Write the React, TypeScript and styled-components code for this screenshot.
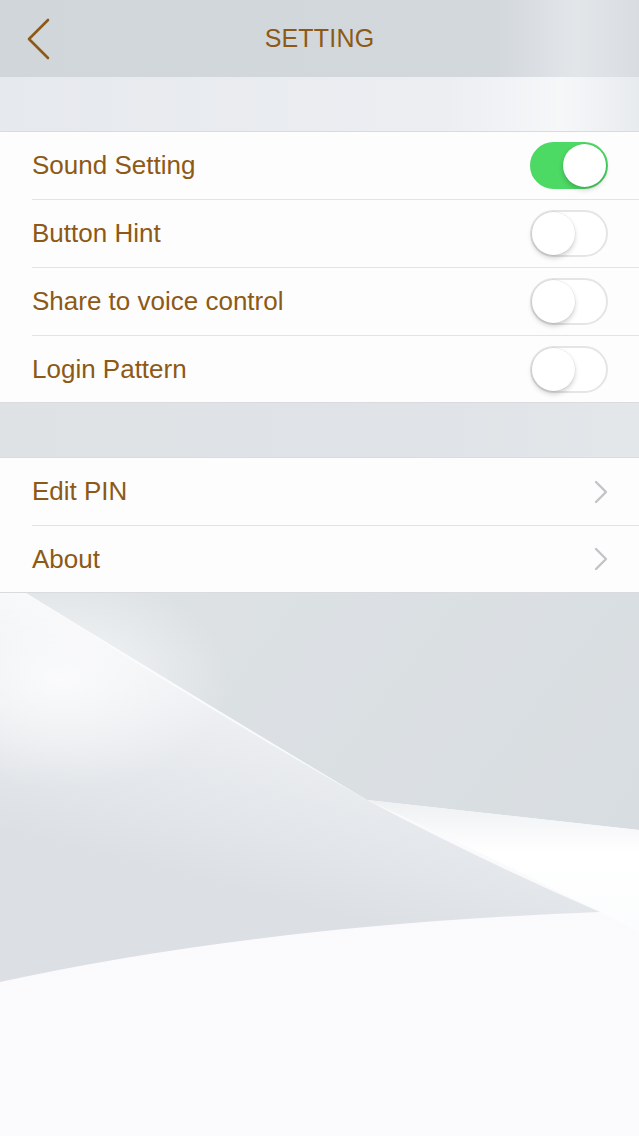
import React from 'react';
import styled, { createGlobalStyle } from 'styled-components';

const GlobalStyle = createGlobalStyle`
  html, body {
    margin: 0;
    padding: 0;
    background: #dfe3e6;
  }
  * {
    box-sizing: border-box;
  }
`;

const brown = '#8c5a16';

const Page = styled.div`
  position: relative;
  width: 100%;
  min-height: 1136px;
  overflow: hidden;
  font-family: 'Liberation Sans', Arial, sans-serif;
`;

const Backdrop = styled.svg`
  position: absolute;
  top: 0;
  left: 0;
  width: 100%;
  height: 1136px;
  z-index: 0;
`;

const Content = styled.div`
  position: relative;
  z-index: 1;
  display: flex;
  flex-direction: column;
`;

const Header = styled.header`
  height: 77px;
  display: grid;
  grid-template-columns: 80px 1fr 80px;
  align-items: center;
  background: linear-gradient(
    90deg,
    #d1d6db 0%,
    #d3d8dd 78%,
    #e3e6e9 90%,
    #d9dde1 100%
  );
`;

const BackButton = styled.button`
  border: none;
  background: none;
  padding: 0 0 0 26px;
  height: 77px;
  display: flex;
  align-items: center;
  cursor: pointer;
`;

const Title = styled.h1`
  margin: 0;
  text-align: center;
  font-size: 25px;
  font-weight: normal;
  color: ${brown};
  letter-spacing: 0.2px;
`;

const Spacer = styled.div<{ $tone: 'light' | 'gray' }>`
  height: 54px;
  background: ${({ $tone }) =>
    $tone === 'light'
      ? 'linear-gradient(90deg, #e6e9ed 0%, #eceef2 70%, #f6f7f9 88%, #e8ebee 100%)'
      : 'linear-gradient(90deg, #dee2e5 0%, #e0e3e7 70%, #e4e7ea 100%)'};
`;

const Group = styled.section`
  background: #fdfdfd;
  border-top: 1px solid #d9dbde;
  border-bottom: 1px solid #d9dbde;
`;

const Row = styled.div`
  height: 68px;
  padding-left: 32px;
  &:last-child {
    height: 66px;
  }
`;

const RowInner = styled.div<{ $last?: boolean }>`
  height: 100%;
  display: flex;
  align-items: center;
  justify-content: space-between;
  padding-right: 31px;
  border-bottom: ${({ $last }) => ($last ? 'none' : '1px solid #e3e3e6')};
`;

const Label = styled.span`
  font-size: 26px;
  color: ${brown};
`;

const Track = styled.div<{ $on: boolean }>`
  position: relative;
  width: 78px;
  height: 47px;
  border-radius: 24px;
  background: ${({ $on }) => ($on ? '#4cd964' : '#ffffff')};
  border: 2px solid ${({ $on }) => ($on ? '#4cd964' : '#e5e5e7')};
  transition: background 0.2s;
`;

const Knob = styled.div<{ $on: boolean }>`
  position: absolute;
  top: 0;
  left: ${({ $on }) => ($on ? '31px' : '0')};
  width: 43px;
  height: 43px;
  border-radius: 50%;
  background: #ffffff;
  box-shadow: 0 3px 5px rgba(0, 0, 0, 0.18), 0 0 0 0.5px rgba(0, 0, 0, 0.08);
`;

const Toggle: React.FC<{ on: boolean }> = ({ on }) => (
  <Track $on={on}>
    <Knob $on={on} />
  </Track>
);

const ChevronRight = () => (
  <svg width="14" height="24" viewBox="0 0 14 24">
    <path d="M2 2 L12 12 L2 22" fill="none" stroke="#c4c4c8" strokeWidth="2.4" strokeLinecap="round" strokeLinejoin="round" />
  </svg>
);

const ChevronLeft = () => (
  <svg width="26" height="42" viewBox="0 0 26 42">
    <path d="M22 2 L3 21 L22 40" fill="none" stroke={brown} strokeWidth="2.6" strokeLinecap="round" strokeLinejoin="round" />
  </svg>
);

const switches = [
  { label: 'Sound Setting', on: true },
  { label: 'Button Hint', on: false },
  { label: 'Share to voice control', on: false },
  { label: 'Login Pattern', on: false },
];

const links = ['Edit PIN', 'About'];

const Background = () => (
  <Backdrop viewBox="0 0 639 1136" preserveAspectRatio="none">
    <defs>
      <linearGradient id="upper" x1="0" y1="0" x2="1" y2="1">
        <stop offset="0" stopColor="#e1e5e7" />
        <stop offset="1" stopColor="#d8dde1" />
      </linearGradient>
      <linearGradient id="lowerLeft" x1="0.6" y1="0.1" x2="0.35" y2="0.75">
        <stop offset="0" stopColor="#ffffff" />
        <stop offset="0.35" stopColor="#eef0f3" />
        <stop offset="1" stopColor="#dce0e4" />
      </linearGradient>
      <linearGradient id="ribbon" x1="0" y1="0" x2="0" y2="1">
        <stop offset="0" stopColor="#eef0f2" />
        <stop offset="0.4" stopColor="#ffffff" />
        <stop offset="1" stopColor="#fbfcfd" />
      </linearGradient>
      <linearGradient id="bottom" x1="0" y1="0" x2="0" y2="1">
        <stop offset="0" stopColor="#f1f3f5" />
        <stop offset="0.25" stopColor="#f8f9fb" />
        <stop offset="1" stopColor="#fbfbfd" />
      </linearGradient>
      <radialGradient id="glow" cx="0.5" cy="0.5" r="0.5">
        <stop offset="0" stopColor="#ffffff" stopOpacity="0.75" />
        <stop offset="0.6" stopColor="#ffffff" stopOpacity="0.3" />
        <stop offset="1" stopColor="#ffffff" stopOpacity="0" />
      </radialGradient>
    </defs>
    <rect x="0" y="0" width="639" height="1136" fill="url(#bottom)" />
    <path d="M0 0 H639 V830 L367 800 Q200 700 26 593 H0 Z" fill="url(#upper)" />
    <path d="M367 800 L639 830 V932 Q500 860 367 800 Z" fill="url(#ribbon)" />
    <path d="M0 593 H26 Q200 705 367 800 Q480 860 600 912 Q260 925 0 982 Z" fill="url(#lowerLeft)" />
    <ellipse cx="60" cy="680" rx="170" ry="110" fill="url(#glow)" />
  </Backdrop>
);

const App: React.FC = () => {
  return (
    <Page>
      <GlobalStyle />
      <Background />
      <Content>
        <Header>
          <BackButton aria-label="Back">
            <ChevronLeft />
          </BackButton>
          <Title>SETTING</Title>
          <div />
        </Header>
        <Spacer $tone="light" />
        <Group>
          {switches.map((item, i) => (
            <Row key={item.label}>
              <RowInner $last={i === switches.length - 1}>
                <Label>{item.label}</Label>
                <Toggle on={item.on} />
              </RowInner>
            </Row>
          ))}
        </Group>
        <Spacer $tone="gray" />
        <Group>
          {links.map((label, i) => (
            <Row key={label}>
              <RowInner $last={i === links.length - 1}>
                <Label>{label}</Label>
                <ChevronRight />
              </RowInner>
            </Row>
          ))}
        </Group>
      </Content>
    </Page>
  );
};

export default App;
